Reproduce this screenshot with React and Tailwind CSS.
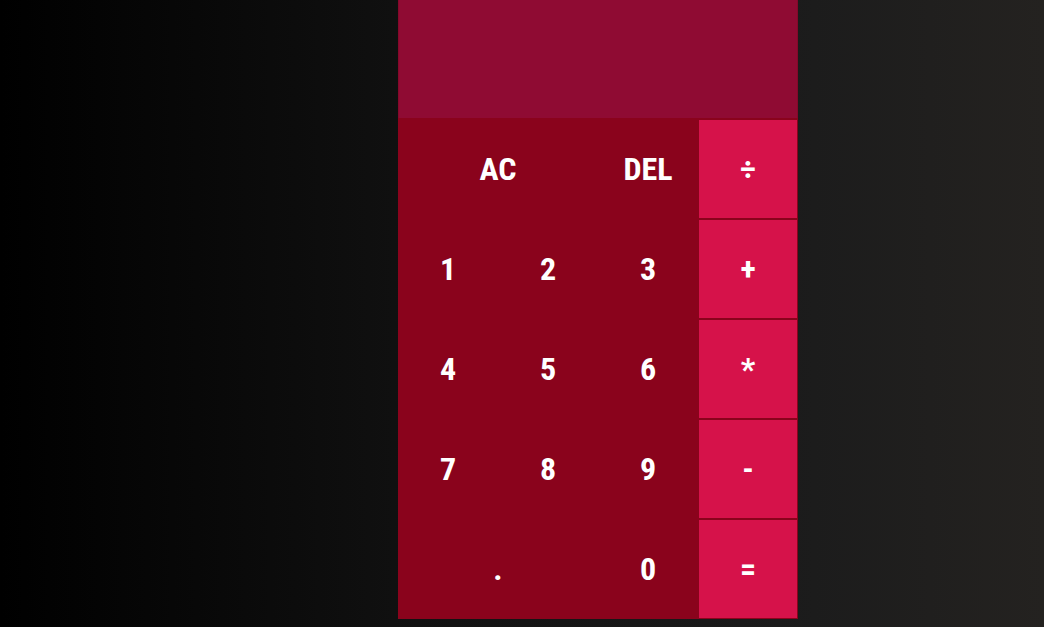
export default function App() {
  const font = { fontFamily: '"Roboto Condensed", "Liberation Sans Narrow", "DejaVu Sans Condensed", Roboto, sans-serif' };
  const num = 'flex items-center justify-center text-white font-bold text-[32px] bg-[#8a031c] border border-[#8a031c]';
  const op = 'flex items-center justify-center text-white font-bold text-[32px] bg-[#d6124a] border border-[#8a031c]';

  return (
    <div className="min-h-screen w-full bg-[linear-gradient(to_right,#000000,#111111_40%,#1c1c1c_78%,#242220)]" style={font}>
      <div className="ml-[398px] w-[400px] flex flex-col">
        <div className="h-[118px] bg-[#8f0b33] border-x border-[#85082a]" />
        <div className="grid grid-cols-4 auto-rows-[100px] bg-[#8a031c] pt-px">
          <button className={`${num} col-span-2`}>AC</button>
          <button className={num}>DEL</button>
          <button className={op}>÷</button>
          <button className={num}>1</button>
          <button className={num}>2</button>
          <button className={num}>3</button>
          <button className={op}>+</button>
          <button className={num}>4</button>
          <button className={num}>5</button>
          <button className={num}>6</button>
          <button className={op}>*</button>
          <button className={num}>7</button>
          <button className={num}>8</button>
          <button className={num}>9</button>
          <button className={op}>-</button>
          <button className={`${num} col-span-2`}>.</button>
          <button className={num}>0</button>
          <button className={op}>=</button>
        </div>
      </div>
    </div>
  );
}
